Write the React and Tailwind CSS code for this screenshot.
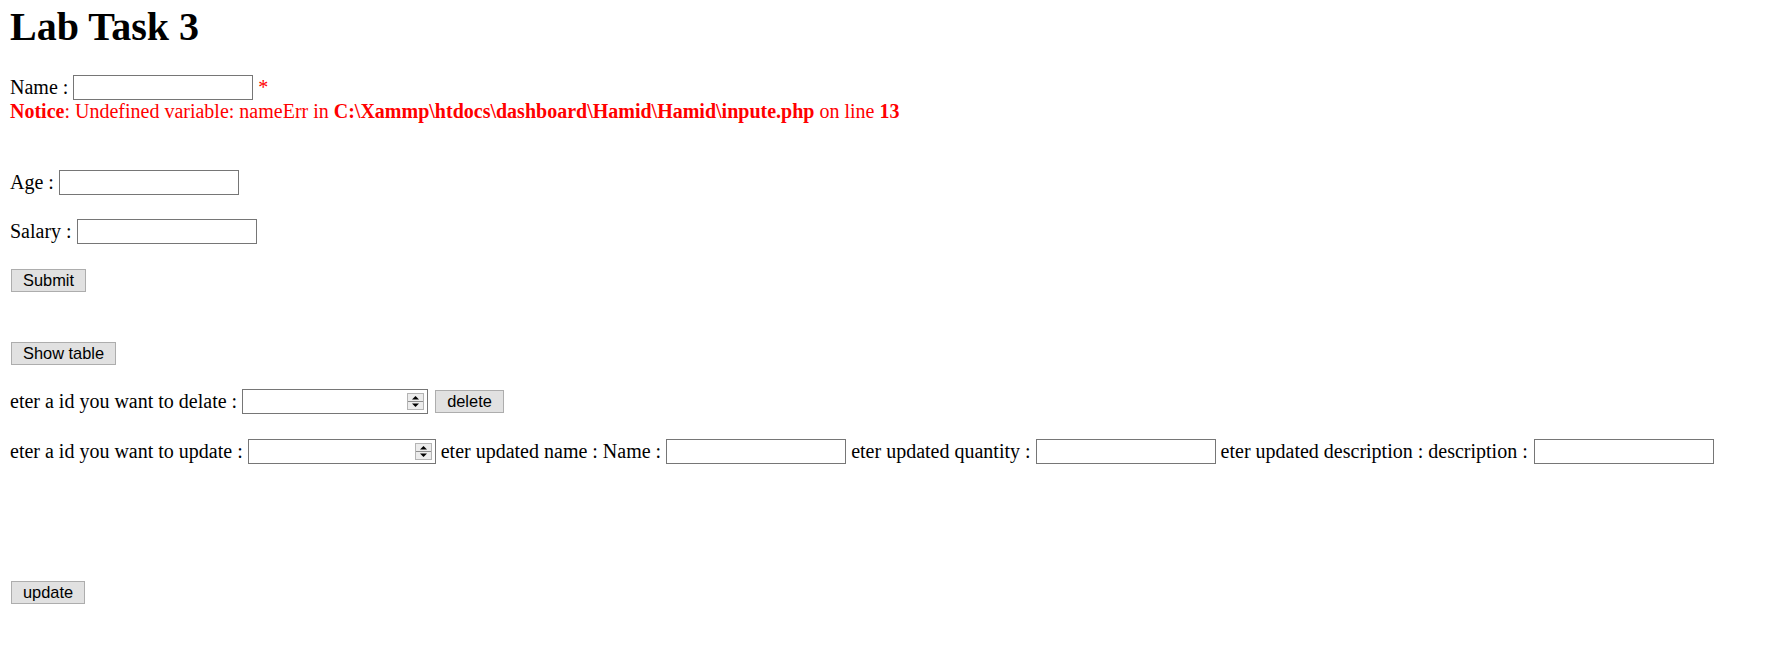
import React from "react";

const serif = { fontFamily: '"Liberation Serif", "Times New Roman", serif' };

function TextBox({ w = "w-[180px]" }) {
  return (
    <div className={`${w} h-[25px] shrink-0 border border-[#767676] bg-white`} />
  );
}

function NumberBox({ w }) {
  return (
    <div className={`${w} h-[25px] shrink-0 border border-[#767676] bg-white flex items-center justify-end pr-[3px]`}>
      <svg width="17" height="17" viewBox="0 0 17 17">
        <rect x="0.5" y="0.5" width="16" height="16" fill="#ececec" stroke="#b4b4b4" />
        <line x1="1" y1="8.5" x2="16" y2="8.5" stroke="#8f8f8f" />
        <polygon points="5,6.5 12,6.5 8.5,3" fill="#000" />
        <polygon points="5,10.5 12,10.5 8.5,14" fill="#000" />
      </svg>
    </div>
  );
}

function Btn({ children, className = "" }) {
  return (
    <button
      className={`h-[23px] px-[11px] border border-[#adadad] bg-[#e1e1e1] text-black text-[16.4px] leading-none flex items-center shrink-0 ${className}`}
      style={{ fontFamily: '"Liberation Sans", Arial, sans-serif' }}
    >
      {children}
    </button>
  );
}

export default function App() {
  return (
    <div className="w-[1773px] h-[653px] bg-white text-black pl-[10px] overflow-hidden" style={serif}>
      <h1 className="text-[40px] font-bold leading-[46px] mt-[4px]">Lab Task 3</h1>

      <div className="flex items-center h-[25px] mt-[25px] text-[20px] leading-[23px] gap-[5px] whitespace-nowrap">
        <span>Name :</span>
        <TextBox />
        <span className="text-[#ff0000]">*</span>
      </div>
      <div className="text-[20px] leading-[23px] text-[#ff0000] whitespace-nowrap">
        <b>Notice</b>: Undefined variable: nameErr in{" "}
        <b>C:\Xammp\htdocs\dashboard\Hamid\Hamid\inpute.php</b> on line <b>13</b>
      </div>

      <div className="flex items-center h-[25px] mt-[47px] text-[20px] leading-[23px] gap-[5px] whitespace-nowrap">
        <span>Age :</span>
        <TextBox />
      </div>

      <div className="flex items-center h-[25px] mt-[24px] text-[20px] leading-[23px] gap-[5px] whitespace-nowrap">
        <span>Salary :</span>
        <TextBox />
      </div>

      <div className="flex mt-[25px] ml-[1px]">
        <Btn>Submit</Btn>
      </div>

      <div className="flex mt-[50px] ml-[1px]">
        <Btn>Show table</Btn>
      </div>

      <div className="flex items-center h-[25px] mt-[24px] text-[20px] leading-[23px] gap-[5px] whitespace-nowrap">
        <span>eter a id you want to delate :</span>
        <NumberBox w="w-[186px]" />
        <Btn className="ml-[2px]">delete</Btn>
      </div>

      <div className="flex items-center h-[25px] mt-[25px] text-[20px] leading-[23px] gap-[5px] whitespace-nowrap">
        <span>eter a id you want to update :</span>
        <NumberBox w="w-[188px]" />
        <span>eter updated name : Name :</span>
        <TextBox />
        <span>eter updated quantity :</span>
        <TextBox />
        <span className="mr-[1px]">eter updated description : description :</span>
        <TextBox />
      </div>

      <div className="flex mt-[117px] ml-[1px]">
        <Btn>update</Btn>
      </div>
    </div>
  );
}
